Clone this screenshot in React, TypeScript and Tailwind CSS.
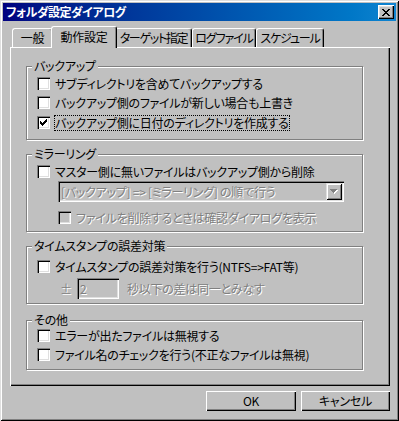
import React from "react";

const sunken =
  "shadow-[inset_1px_1px_#808080,inset_2px_2px_#000,inset_-1px_-1px_#fff,inset_-2px_-2px_#dfdfdf]";
const raised =
  "shadow-[inset_1px_1px_#fff,inset_-1px_-1px_#000,inset_-2px_-2px_#808080]";
const disabledText = "text-[#808080] [text-shadow:1px_1px_0_#fff]";

const CheckBox: React.FC<{ checked?: boolean; disabled?: boolean }> = ({
  checked,
  disabled,
}) => (
  <span
    className={`w-[13px] h-[13px] shrink-0 flex items-center justify-center ${sunken} ${
      disabled ? "bg-[#c0c0c0]" : "bg-white"
    }`}
  >
    {checked && (
      <svg width="7" height="7" viewBox="0 0 7 7" shapeRendering="crispEdges">
        <path
          d="M6 0h1v3h-1v1h-1v1h-1v1h-1v1h-1v-1h-1v-1h-1v-3h1v1h1v1h1v-1h1v-1h1z"
          fill="#000"
        />
      </svg>
    )}
  </span>
);

const Row: React.FC<{
  label: string;
  checked?: boolean;
  disabled?: boolean;
  focused?: boolean;
  className?: string;
}> = ({ label, checked, disabled, focused, className = "" }) => (
  <div className={`flex items-center h-[13px] ${className}`}>
    <CheckBox checked={checked} disabled={disabled} />
    <span
      className={`ml-[5px] leading-[14px] whitespace-nowrap ${
        focused ? "outline outline-1 outline-dotted outline-black" : ""
      } ${disabled ? disabledText : ""}`}
    >
      {label}
    </span>
  </div>
);

const Group: React.FC<{
  title: string;
  className: string;
  children: React.ReactNode;
}> = ({ title, className, children }) => (
  <div
    className={`ml-[16px] w-[337px] border border-[#808080] shadow-[1px_1px_0_#fff,inset_1px_1px_0_#fff] flex flex-col ${className}`}
  >
    <span className="-mt-[8px] ml-[5px] px-[2px] w-fit bg-[#c0c0c0] leading-[14px] whitespace-nowrap">
      {title}
    </span>
    <div className="pl-[10px] flex flex-col">{children}</div>
  </div>
);

const tabs = [
  { id: "general", label: "一般", w: "w-[41px]", t: "" },
  { id: "action", label: "動作設定", w: "w-[66px]", t: "tracking-[-0.3px]" },
  { id: "target", label: "ターゲット指定", w: "w-[77px]", t: "tracking-[-1.3px]" },
  { id: "log", label: "ログファイル", w: "w-[64px]", t: "tracking-[-1.1px]" },
  { id: "schedule", label: "スケジュール", w: "w-[68px]", t: "tracking-[-1.1px]" },
];

export default function App() {
  const current = "action";
  return (
    <div className="w-[399px] h-[421px] bg-[#c0c0c0] p-[3px] flex flex-col text-[12px] tracking-[-0.25px] text-black font-['Noto_Sans_CJK_JP',sans-serif] [font-feature-settings:'palt'] shadow-[inset_1px_1px_#dfdfdf,inset_-1px_-1px_#000,inset_2px_2px_#fff,inset_-2px_-2px_#808080]">
      {/* title bar */}
      <div className="h-[18px] flex items-center justify-between bg-linear-to-r from-[#000080] to-[#1084d0] pl-[3px] pr-[2px]">
        <span className="text-white font-bold leading-[14px] tracking-[-0.5px]">
          フォルダ設定ダイアログ
        </span>
        <button className="w-[16px] h-[14px] bg-[#c0c0c0] flex items-center justify-center shadow-[inset_1px_1px_#fff,inset_-1px_-1px_#000,inset_-2px_-2px_#808080,inset_2px_2px_#dfdfdf]">
          <svg width="8" height="7" viewBox="0 0 8 7" shapeRendering="crispEdges">
            <path
              d="M0 0h2v1h1v1h2v-1h1v-1h2v1h-1v1h-1v1h-1v1h1v1h1v1h1v1h-2v-1h-1v-1h-2v1h-1v1h-2v-1h1v-1h1v-1h1v-1h-1v-1h-1v-1h-1z"
              fill="#000"
            />
          </svg>
        </button>
      </div>

      <div className="flex-1 flex flex-col pl-[7px] pr-[6px] pt-[5px]">
        {/* tabs */}
        <div className="h-[21px] flex items-end pl-[2px]">
          {tabs.map((t) =>
            t.id === current ? (
              <div
                key={t.id}
                className={`${t.w} ${t.t} h-[22px] -mx-[2px] -mb-[1px] relative z-10 bg-[#c0c0c0] border-l border-t border-white border-r border-r-black rounded-t-[3px] shadow-[inset_-1px_0_#808080] flex items-center justify-center pb-[2px] whitespace-nowrap`}
              >
                {t.label}
              </div>
            ) : (
              <div
                key={t.id}
                className={`${t.w} ${t.t} h-[19px] bg-[#c0c0c0] border-l border-t border-white border-r border-r-black rounded-t-[3px] shadow-[inset_-1px_0_#808080] flex items-center justify-center whitespace-nowrap`}
              >
                {t.label}
              </div>
            )
          )}
        </div>

        {/* tab panel */}
        <div className={`h-[339px] flex flex-col ${raised}`}>
          <Group title="バックアップ" className="mt-[19px] h-[74px]">
            <Row className="mt-[4px]" label="サブディレクトリを含めてバックアップする" />
            <Row className="mt-[6px]" label="バックアップ側のファイルが新しい場合も上書き" />
            <Row
              className="mt-[7px]"
              label="バックアップ側に日付のディレクトリを作成する"
              checked
              focused
            />
          </Group>

          <Group title="ミラーリング" className="mt-[14px] h-[78px]">
            <Row className="mt-[4px]" label="マスター側に無いファイルはバックアップ側から削除" />
            <div
              className={`mt-[3px] ml-[21px] w-[286px] h-[21px] bg-[#c0c0c0] ${sunken} flex items-center justify-between pl-[3px] pr-[2px]`}
            >
              <span className={`leading-[14px] whitespace-nowrap ${disabledText}`}>
                [バックアップ] =&gt; [ミラーリング] の順で行う
              </span>
              <span className="w-[16px] h-[17px] bg-[#c0c0c0] flex items-center justify-center shadow-[inset_1px_1px_#dfdfdf,inset_-1px_-1px_#000,inset_2px_2px_#fff,inset_-2px_-2px_#808080]">
                <svg width="8" height="5" viewBox="0 0 8 5" shapeRendering="crispEdges">
                  <path d="M1 1h7v1h-1v1h-1v1h-1v1h-1v-1h-1v-1h-1v-1h-1z" fill="#fff" />
                  <path d="M0 0h7v1h-1v1h-1v1h-1v1h-1v-1h-1v-1h-1v-1h-1z" fill="#808080" />
                </svg>
              </span>
            </div>
            <Row
              className="mt-[9px] ml-[21px]"
              label="ファイルを削除するときは確認ダイアログを表示"
              disabled
            />
          </Group>

          <Group title="タイムスタンプの誤差対策" className="mt-[14px] h-[58px]">
            <Row className="mt-[7px]" label="タイムスタンプの誤差対策を行う(NTFS=>FAT等)" />
            <div className="mt-[5px] ml-[23px] flex items-center h-[21px]">
              <span className={`w-[17px] leading-[14px] ${disabledText}`}>±</span>
              <span
                className={`w-[42px] h-[21px] bg-[#c0c0c0] ${sunken} flex items-center pl-[3px] leading-[14px] ${disabledText}`}
              >
                2
              </span>
              <span className={`ml-[8px] leading-[14px] whitespace-nowrap ${disabledText}`}>
                秒以下の差は同一とみなす
              </span>
            </div>
          </Group>

          <Group title="その他" className="mt-[16px] h-[50px]">
            <Row className="mt-[2px]" label="エラーが出たファイルは無視する" />
            <Row className="mt-[6px]" label="ファイル名のチェックを行う(不正なファイルは無視)" />
          </Group>
        </div>

        {/* buttons */}
        <div className="mt-[5px] flex justify-end gap-[5px]">
          <button
            className={`w-[90px] h-[20px] bg-[#c0c0c0] ${raised} flex items-center justify-center leading-[14px]`}
          >
            OK
          </button>
          <button
            className={`w-[89px] h-[20px] bg-[#c0c0c0] ${raised} flex items-center justify-center leading-[14px]`}
          >
            キャンセル
          </button>
        </div>
      </div>
    </div>
  );
}
